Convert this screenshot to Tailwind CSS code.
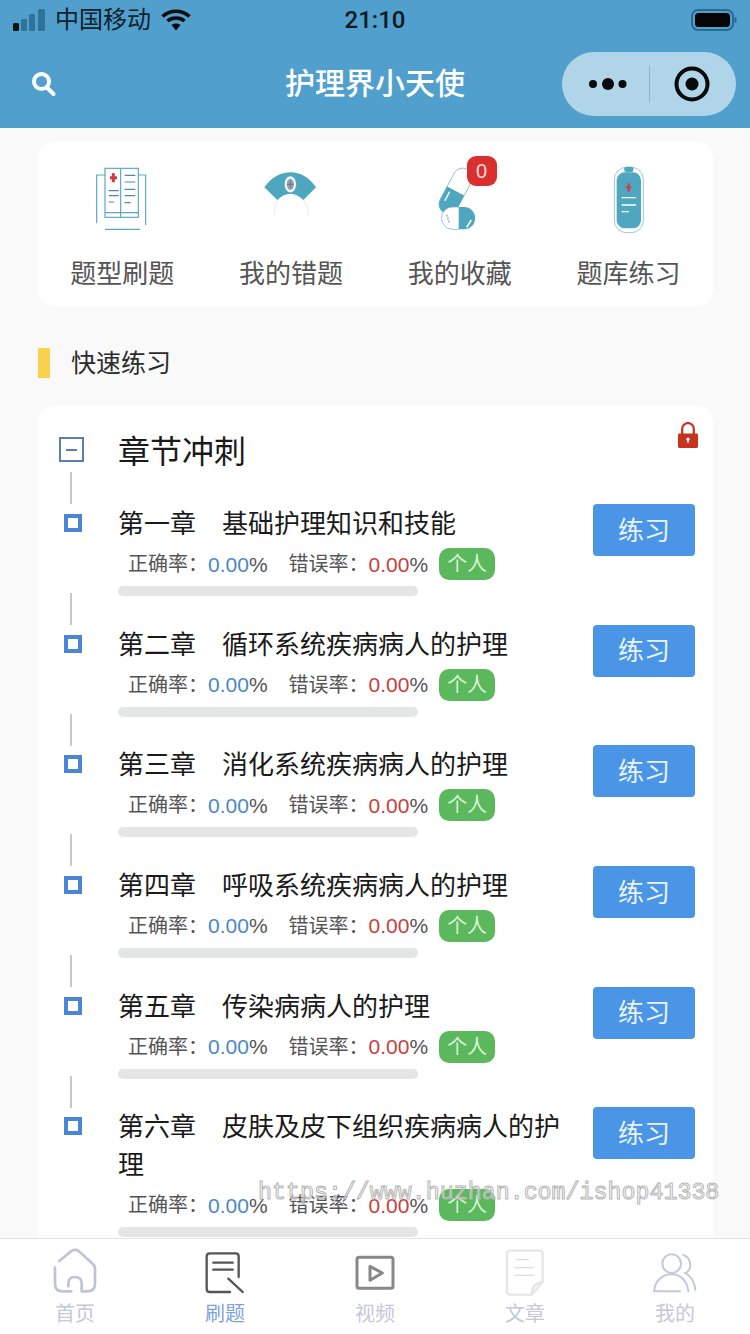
<!DOCTYPE html>
<html lang="zh-CN">
<head>
  <meta charset="UTF-8">
  <title>护理界小天使</title>
  <script src="https://cdn.jsdelivr.net/npm/@tailwindcss/browser@4"></script>
</head>
<body class="[font-family:'Liberation_Sans','Noto_Sans_CJK_SC',sans-serif]">
<div class="relative w-[750px] h-[1334px] flex flex-col overflow-hidden bg-[#f9f9f9]">

  <!-- header -->
  <header class="bg-[#509fcc] h-[128px] shrink-0">
    <div class="h-[40px] grid grid-cols-[1fr_auto_1fr] items-center">
      <div class="flex items-center pl-[13px]">
        <svg width="34" height="22" viewBox="0 0 34 22">
          <rect x="0" y="14" width="6" height="8" rx="1.5" fill="#111"/>
          <rect x="8" y="10" width="6" height="12" rx="1.5" fill="#2f7396"/>
          <rect x="16" y="5" width="6" height="17" rx="1.5" fill="#2f7396"/>
          <rect x="25" y="0" width="7" height="22" rx="1.5" fill="#2f7396"/>
        </svg>
        <span class="ml-[8px] text-[24px] leading-none text-[#10222c]">中国移动</span>
        <svg class="ml-[10px]" width="30" height="22" viewBox="0 0 30 22" fill="none" stroke="#0c0c0c" stroke-width="3.6">
          <path d="M1.5 7.5 C9 .5 21 .5 28.500 7.500"/>
          <path d="M6.500 12 C11 8 19 8 23.500 12"/>
          <path d="M15 21.500 L10.500 16 C13 14 17 14 19.500 16 Z" fill="#0c0c0c" stroke="none"/>
        </svg>
      </div>
      <div class="[font-family:Roboto,sans-serif] text-[24px] font-medium leading-none text-[#0c1a22]">21:10</div>
      <div class="flex justify-end pr-[13px]">
        <svg width="46" height="22" viewBox="0 0 46 22">
          <rect x="1" y="1" width="41" height="20" rx="6" fill="none" stroke="#2a6a90" stroke-width="2"/>
          <rect x="4" y="4" width="35" height="14" rx="3.500" fill="#050505"/>
          <rect x="43.500" y="8" width="2" height="6" rx="1" fill="#2a6a90"/>
        </svg>
      </div>
    </div>
    <div class="h-[88px] grid grid-cols-[1fr_auto_1fr] items-center">
      <div class="pl-[31px]">
        <svg width="26" height="26" viewBox="0 0 26 26" fill="none" stroke="#fff" stroke-width="4" stroke-linecap="round">
          <circle cx="10.500" cy="10.500" r="7.500"/>
          <path d="M16.500 17 L22.500 23"/>
        </svg>
      </div>
      <h1 class="text-[30px] leading-none font-medium text-white">护理界小天使</h1>
      <div class="flex justify-end pr-[14px]">
        <div class="w-[174px] h-[64px] rounded-[32px] bg-[#b1d5e8] flex items-center">
          <svg class="ml-[26px]" width="40" height="14" viewBox="0 0 40 14" fill="#0a0a0a">
            <circle cx="5" cy="7" r="4"/><circle cx="20" cy="7" r="6"/><circle cx="34.500" cy="7" r="4"/>
          </svg>
          <div class="ml-[21px] w-px h-[36px] bg-[#8fb3c6]"></div>
          <svg class="ml-[23px]" width="38" height="38" viewBox="0 0 38 38">
            <circle cx="19" cy="19" r="15.500" fill="none" stroke="#0a0a0a" stroke-width="4"/>
            <circle cx="19" cy="19" r="6.500" fill="#0a0a0a"/>
          </svg>
        </div>
      </div>
    </div>
  </header>

  <!-- page content -->
  <main class="flex-1 min-h-0 overflow-hidden pl-[38px] pr-[37px] pt-[14px]">

    <section class="h-[164px] rounded-[16px] bg-white grid grid-cols-4">
      <a class="relative flex flex-col items-center pt-[18px]">
        <svg width="80" height="76" viewBox="156 60 240 228" fill="none" stroke="#5ba7bf" stroke-width="3.5">
          <path d="M200 250 V105 H225 M325 105 H347 V255"/>
          <path d="M225 268 H330" stroke-width="4"/>
          <rect x="225" y="85" width="100" height="147"/>
          <path d="M272 85 V232 M225 218 H325"/>
          <path d="M236 152 H266 M236 167 H266 M236 186 H252 M284 106 H316 M284 126 H316 M284 148 H316 M284 167 H316 M284 188 H302" stroke="#52899b"/>
          <path d="M250 100 V127 M240 113 H261" stroke="#cf3a4a" stroke-width="9"/>
        </svg>
        <span class="mt-[18px] text-[26px] leading-[40px] text-[#555]">题型刷题</span>
      </a>
      <a class="relative flex flex-col items-center pt-[18px]">
        <svg width="80" height="76" viewBox="663 60 240 228">
          <path d="M735 225 C732 205 736 192 744 180 M820 180 C830 192 836 205 834 225" fill="none" stroke="#ddd" stroke-width="2"/>
          <path d="M703 142 C745 82 818 82 858 142 L820 180 C795 155 768 155 742 180 Z" fill="#4fa6bf"/>
          <ellipse cx="781" cy="133" rx="18" ry="25" fill="#fff" stroke="#4fa6bf" stroke-width="2"/>
          <ellipse cx="781" cy="133" rx="11" ry="17" fill="#72aec2"/>
          <path d="M781 122 V144 M771 133 H791" stroke="#c9505e" stroke-width="3"/>
        </svg>
        <span class="mt-[18px] text-[26px] leading-[40px] text-[#555]">我的错题</span>
      </a>
      <a class="relative flex flex-col items-center pt-[18px]">
        <svg width="80" height="76" viewBox="118 60 240 228">
          <g transform="translate(225 153) rotate(28)">
            <rect x="-29" y="-74" width="58" height="148" rx="29" fill="#fff" stroke="#6fa9c0" stroke-width="2"/>
            <path d="M-29 0 H29 V45 A29 29 0 0 1 -29 45 Z" fill="#4fa6bf"/>
            <path d="M-15 12 V40" stroke="#fff" stroke-width="4" stroke-linecap="round"/>
          </g>
          <path d="M235 201 H216 A33 33 0 0 0 216 268 H235 Z" fill="#fff" stroke="#6fa9c0" stroke-width="2"/>
          <path d="M235 201 H250 A33 33 0 0 1 250 268 H235 Z" fill="#4fa6bf"/>
          <path d="M258 262 L272 240" stroke="#fff" stroke-width="5"/>
          <path d="M198 225 L206 247" stroke="#6fa9c0" stroke-width="4" stroke-dasharray="5 4"/>
        </svg>
        <span class="mt-[18px] text-[26px] leading-[40px] text-[#555]">我的收藏</span>
        <span class="absolute left-[91px] top-[14px] w-[30px] h-[30px] rounded-[9px] bg-[#d9302f] text-[#fbd9d6] text-[20px] leading-[30px] text-center">0</span>
      </a>
      <a class="relative flex flex-col items-center pt-[18px]">
        <svg width="80" height="76" viewBox="622 60 240 228">
          <rect x="698" y="82" width="87" height="196" rx="36" fill="#fff" stroke="#5fb0c8" stroke-width="2"/>
          <rect x="705" y="97" width="73" height="168" rx="24" fill="#4fa6bf"/>
          <rect x="728" y="80" width="27" height="16" rx="5" fill="#4fa6bf"/>
          <path d="M741 130 V155 M733 142 H749" stroke="#d23a4a" stroke-width="6"/>
          <path d="M720 173 H763 M720 195 H763 M720 215 H742" stroke="#fff" stroke-width="4"/>
        </svg>
        <span class="mt-[18px] text-[26px] leading-[40px] text-[#555]">题库练习</span>
      </a>
    </section>

    <div class="mt-[42px] h-[30px] flex items-center">
      <div class="w-[12px] h-[30px] bg-[#f9d24e]"></div>
      <span class="ml-[21px] text-[25px] leading-none text-[#2c2c2c]">快速练习</span>
    </div>

    <section class="relative mt-[28px] rounded-[16px] bg-white">
      <svg class="absolute right-[15px] top-[16px]" width="20" height="26" viewBox="893 65 62 80">
        <path d="M906 105 V86 A18 18 0 0 1 942 86 V105" fill="none" stroke="#c8321f" stroke-width="7"/>
        <rect x="893" y="100" width="62" height="45" rx="4" fill="#c8321f"/>
        <circle cx="924" cy="118" r="5" fill="#fff"/>
        <rect x="922" y="118" width="4" height="12" fill="#fff"/>
      </svg>

      <div class="h-[98.3px] flex">
        <div class="w-[80px] shrink-0 pl-[21px] pt-[31px]">
          <div class="w-[25px] h-[25px] border-2 border-[#5b7fb5] flex items-center justify-center">
            <div class="w-[11px] h-[2px] bg-[#5b7fb5]"></div>
          </div>
          <div class="ml-[11px] mt-[10px] w-[2px] h-[32px] bg-[#c8c8c8]"></div>
        </div>
        <h2 class="pt-[26px] text-[32px] leading-[40px] text-[#1a1a1a]">章节冲刺</h2>
      </div>

      <div class="flex pr-[18px] pb-[28.6px]">
        <div class="w-[80px] shrink-0 pl-[26px] pt-[10px] flex flex-col relative">
          <div class="w-[18px] h-[18px] border-[4px] border-[#4a85d6]"></div>
          <div class="absolute left-[32px] top-[89px] w-[2px] h-[32px] bg-[#c8c8c8]"></div>
        </div>
        <div class="flex-1 min-w-0 pr-[18px]">
          <div class="pt-[1px] text-[26px] leading-[38px] text-[#1a1a1a]">第一章　基础护理知识和技能</div>
          <div class="mt-[5px] h-[32px] pl-[10px] flex items-center text-[20px] text-[#555]">
            <span>正确率：</span><span class="text-[#4a88c7] text-[21px]">0.00</span><span class="text-[21px]">%</span>
            <span class="ml-[21px]">错误率：</span><span class="text-[#c8403c] text-[21px]">0.00</span><span class="text-[21px]">%</span>
            <span class="ml-[11px] w-[56px] h-[32px] rounded-[10px] bg-[#5cb85c] text-[#d7f3d7] leading-[32px] text-center">个人</span>
          </div>
          <div class="mt-[6px] w-[300px] h-[10px] rounded-full bg-[#e4e6e6]"></div>
        </div>
        <button class="w-[102px] h-[52px] shrink-0 pt-[2px] rounded-[4px] bg-[#4a95e5] text-[26px] text-[#e8f3ff]">练习</button>
      </div>

      <div class="flex pr-[18px] pb-[28.6px]">
        <div class="w-[80px] shrink-0 pl-[26px] pt-[10px] flex flex-col relative">
          <div class="w-[18px] h-[18px] border-[4px] border-[#4a85d6]"></div>
          <div class="absolute left-[32px] top-[89px] w-[2px] h-[32px] bg-[#c8c8c8]"></div>
        </div>
        <div class="flex-1 min-w-0 pr-[18px]">
          <div class="pt-[1px] text-[26px] leading-[38px] text-[#1a1a1a]">第二章　循环系统疾病病人的护理</div>
          <div class="mt-[5px] h-[32px] pl-[10px] flex items-center text-[20px] text-[#555]">
            <span>正确率：</span><span class="text-[#4a88c7] text-[21px]">0.00</span><span class="text-[21px]">%</span>
            <span class="ml-[21px]">错误率：</span><span class="text-[#c8403c] text-[21px]">0.00</span><span class="text-[21px]">%</span>
            <span class="ml-[11px] w-[56px] h-[32px] rounded-[10px] bg-[#5cb85c] text-[#d7f3d7] leading-[32px] text-center">个人</span>
          </div>
          <div class="mt-[6px] w-[300px] h-[10px] rounded-full bg-[#e4e6e6]"></div>
        </div>
        <button class="w-[102px] h-[52px] shrink-0 pt-[2px] rounded-[4px] bg-[#4a95e5] text-[26px] text-[#e8f3ff]">练习</button>
      </div>

      <div class="flex pr-[18px] pb-[28.6px]">
        <div class="w-[80px] shrink-0 pl-[26px] pt-[10px] flex flex-col relative">
          <div class="w-[18px] h-[18px] border-[4px] border-[#4a85d6]"></div>
          <div class="absolute left-[32px] top-[89px] w-[2px] h-[32px] bg-[#c8c8c8]"></div>
        </div>
        <div class="flex-1 min-w-0 pr-[18px]">
          <div class="pt-[1px] text-[26px] leading-[38px] text-[#1a1a1a]">第三章　消化系统疾病病人的护理</div>
          <div class="mt-[5px] h-[32px] pl-[10px] flex items-center text-[20px] text-[#555]">
            <span>正确率：</span><span class="text-[#4a88c7] text-[21px]">0.00</span><span class="text-[21px]">%</span>
            <span class="ml-[21px]">错误率：</span><span class="text-[#c8403c] text-[21px]">0.00</span><span class="text-[21px]">%</span>
            <span class="ml-[11px] w-[56px] h-[32px] rounded-[10px] bg-[#5cb85c] text-[#d7f3d7] leading-[32px] text-center">个人</span>
          </div>
          <div class="mt-[6px] w-[300px] h-[10px] rounded-full bg-[#e4e6e6]"></div>
        </div>
        <button class="w-[102px] h-[52px] shrink-0 pt-[2px] rounded-[4px] bg-[#4a95e5] text-[26px] text-[#e8f3ff]">练习</button>
      </div>

      <div class="flex pr-[18px] pb-[28.6px]">
        <div class="w-[80px] shrink-0 pl-[26px] pt-[10px] flex flex-col relative">
          <div class="w-[18px] h-[18px] border-[4px] border-[#4a85d6]"></div>
          <div class="absolute left-[32px] top-[89px] w-[2px] h-[32px] bg-[#c8c8c8]"></div>
        </div>
        <div class="flex-1 min-w-0 pr-[18px]">
          <div class="pt-[1px] text-[26px] leading-[38px] text-[#1a1a1a]">第四章　呼吸系统疾病病人的护理</div>
          <div class="mt-[5px] h-[32px] pl-[10px] flex items-center text-[20px] text-[#555]">
            <span>正确率：</span><span class="text-[#4a88c7] text-[21px]">0.00</span><span class="text-[21px]">%</span>
            <span class="ml-[21px]">错误率：</span><span class="text-[#c8403c] text-[21px]">0.00</span><span class="text-[21px]">%</span>
            <span class="ml-[11px] w-[56px] h-[32px] rounded-[10px] bg-[#5cb85c] text-[#d7f3d7] leading-[32px] text-center">个人</span>
          </div>
          <div class="mt-[6px] w-[300px] h-[10px] rounded-full bg-[#e4e6e6]"></div>
        </div>
        <button class="w-[102px] h-[52px] shrink-0 pt-[2px] rounded-[4px] bg-[#4a95e5] text-[26px] text-[#e8f3ff]">练习</button>
      </div>

      <div class="flex pr-[18px] pb-[28.6px]">
        <div class="w-[80px] shrink-0 pl-[26px] pt-[10px] flex flex-col relative">
          <div class="w-[18px] h-[18px] border-[4px] border-[#4a85d6]"></div>
          <div class="absolute left-[32px] top-[89px] w-[2px] h-[32px] bg-[#c8c8c8]"></div>
        </div>
        <div class="flex-1 min-w-0 pr-[18px]">
          <div class="pt-[1px] text-[26px] leading-[38px] text-[#1a1a1a]">第五章　传染病病人的护理</div>
          <div class="mt-[5px] h-[32px] pl-[10px] flex items-center text-[20px] text-[#555]">
            <span>正确率：</span><span class="text-[#4a88c7] text-[21px]">0.00</span><span class="text-[21px]">%</span>
            <span class="ml-[21px]">错误率：</span><span class="text-[#c8403c] text-[21px]">0.00</span><span class="text-[21px]">%</span>
            <span class="ml-[11px] w-[56px] h-[32px] rounded-[10px] bg-[#5cb85c] text-[#d7f3d7] leading-[32px] text-center">个人</span>
          </div>
          <div class="mt-[6px] w-[300px] h-[10px] rounded-full bg-[#e4e6e6]"></div>
        </div>
        <button class="w-[102px] h-[52px] shrink-0 pt-[2px] rounded-[4px] bg-[#4a95e5] text-[26px] text-[#e8f3ff]">练习</button>
      </div>

      <div class="flex pr-[18px] pb-[28.6px]">
        <div class="w-[80px] shrink-0 pl-[26px] pt-[10px] flex flex-col relative">
          <div class="w-[18px] h-[18px] border-[4px] border-[#4a85d6]"></div>
        </div>
        <div class="flex-1 min-w-0 pr-[18px]">
          <div class="pt-[1px] text-[26px] leading-[38px] text-[#1a1a1a]">第六章　皮肤及皮下组织疾病病人的护理</div>
          <div class="mt-[5px] h-[32px] pl-[10px] flex items-center text-[20px] text-[#555]">
            <span>正确率：</span><span class="text-[#4a88c7] text-[21px]">0.00</span><span class="text-[21px]">%</span>
            <span class="ml-[21px]">错误率：</span><span class="text-[#c8403c] text-[21px]">0.00</span><span class="text-[21px]">%</span>
            <span class="ml-[11px] w-[56px] h-[32px] rounded-[10px] bg-[#5cb85c] text-[#d7f3d7] leading-[32px] text-center">个人</span>
          </div>
          <div class="mt-[6px] w-[300px] h-[10px] rounded-full bg-[#e4e6e6]"></div>
        </div>
        <button class="w-[102px] h-[52px] shrink-0 pt-[2px] rounded-[4px] bg-[#4a95e5] text-[26px] text-[#e8f3ff]">练习</button>
      </div>
    </section>
  </main>

  <!-- tab bar -->
  <nav class="h-[96px] shrink-0 border-t border-[#e2e2e2] bg-white grid grid-cols-5">
    <a class="flex flex-col items-center pt-[8px]">
      <svg width="50" height="50" viewBox="150 50 150 150" fill="none" stroke="#c0c3d8" stroke-width="8" stroke-linecap="round" stroke-linejoin="round">
        <path d="M178 92 L214 62 Q225 55 236 62 L278 100 Q285 106 285 116 V160 Q285 183 260 183 H245 V160 Q245 140 225 140 Q205 140 205 160 V168"/>
        <path d="M165 112 V160 Q165 183 190 183 H214"/>
      </svg>
      <span class="mt-[3px] text-[20px] leading-[28px] text-[#c5c9d6]">首页</span>
    </a>
    <a class="flex flex-col items-center pt-[8px]">
      <svg width="50" height="50" viewBox="600 50 150 150" fill="none" stroke="#555" stroke-width="7" stroke-linecap="round" stroke-linejoin="round">
        <path d="M716 140 V78 Q716 69 707 69 H630 Q620 69 620 78 V175 Q620 185 630 185 H690"/>
        <path d="M640 97 H698 M640 118 H698 M685 145 L728 185"/>
      </svg>
      <span class="mt-[3px] text-[20px] leading-[28px] text-[#7fa3d9]">刷题</span>
    </a>
    <a class="flex flex-col items-center pt-[8px]">
      <svg width="50" height="50" viewBox="0 50 150 150" fill="none" stroke="#888" stroke-width="9" stroke-linejoin="round">
        <rect x="21" y="81" width="108" height="93" rx="6"/>
        <path d="M60 108 L97 128 L60 150 Z"/>
      </svg>
      <span class="mt-[3px] text-[20px] leading-[28px] text-[#c5c9d6]">视频</span>
    </a>
    <a class="flex flex-col items-center pt-[8px]">
      <svg width="50" height="50" viewBox="450 50 150 150" fill="none" stroke="#e6e6e6" stroke-width="7" stroke-linecap="round" stroke-linejoin="round">
        <path d="M578 155 V70 Q578 61 569 61 H481 Q471 61 471 70 V183 Q471 193 481 193 H545 Z"/>
        <path d="M545 193 Q545 160 578 155"/>
        <path d="M500 88 H535 M495 112 H550 M495 135 H550" stroke="#dedede" stroke-width="4"/>
      </svg>
      <span class="mt-[3px] text-[20px] leading-[28px] text-[#c5c9d6]">文章</span>
    </a>
    <a class="flex flex-col items-center pt-[8px]">
      <svg width="50" height="50" viewBox="900 50 150 150" fill="none" stroke="#c5c7dc" stroke-width="6" stroke-linecap="round">
        <circle cx="965" cy="100" r="28"/>
        <path d="M990 183 H912 C915 150 938 132 965 132 C992 132 1012 152 1015 183"/>
        <path d="M1000 74 C1025 82 1028 118 1006 128 C1024 138 1034 158 1036 178"/>
      </svg>
      <span class="mt-[3px] text-[20px] leading-[28px] text-[#c5c9d6]">我的</span>
    </a>
  </nav>

  <!-- watermark burned into the screenshot -->
  <div class="absolute left-[258px] top-[1178px] whitespace-nowrap [font-family:'Liberation_Mono',monospace] text-[23.3px] leading-[30px] text-white/50 [-webkit-text-stroke:1px_#b5b5b5]">https://www.huzhan.com/ishop41338</div>
</div>
</body>
</html>
